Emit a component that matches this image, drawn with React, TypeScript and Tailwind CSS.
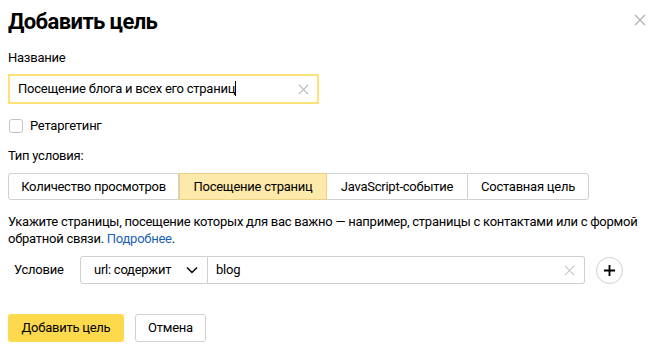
import React from "react";

export default function App() {
  return (
    <div className="relative w-[658px] h-[348px] bg-white text-[13px] text-[#000] overflow-hidden tracking-[-0.25px]" style={{ fontFamily: "Roboto, 'Noto Sans', sans-serif" }}>
      <button className="absolute left-[633px] top-[13px] w-[14px] h-[14px] text-[#b3b3b3]">
        <svg viewBox="0 0 14 14" width="14" height="14" fill="none" stroke="currentColor" strokeWidth="1.4">
          <path d="M2 2 L12 12 M12 2 L2 12" />
        </svg>
      </button>
      <div className="pl-[8px] pt-[8px] flex flex-col">
        <h1 className="text-[22px] font-bold leading-[28px] tracking-[-0.6px]">Добавить цель</h1>
        <div className="mt-[14px] leading-[16px]">Название</div>
        <div className="mt-[8px] w-[311px] h-[30px] border-2 border-[#fde27a] flex items-center pl-[8px] pr-[8px]">
          <span className="flex-1 leading-[16px]">Посещение блога и всех его страниц<span className="inline-block w-[1px] h-[15px] bg-black align-[-3px]" /></span>
          <svg viewBox="0 0 12 12" width="11" height="11" fill="none" stroke="#b3b3b3" strokeWidth="1.1">
            <path d="M1 1 L11 11 M11 1 L1 11" />
          </svg>
        </div>
        <div className="mt-[15px] flex items-center h-[14px]">
          <span className="w-[14px] h-[14px] ml-[1px] border border-[#c4c4c4] rounded-[3px]" />
          <span className="ml-[7px] leading-[16px]">Ретаргетинг</span>
        </div>
        <div className="mt-[15px] leading-[16px]">Тип условия:</div>
        <div className="mt-[9px] flex h-[27px]">
          <div className="w-[171px] border border-[#d0d0d0] rounded-l-[3px] flex items-center justify-center">Количество просмотров</div>
          <div className="w-[148px] bg-[#fde9a9] border border-[#ebd083] flex items-center justify-center">Посещение страниц</div>
          <div className="w-[140px] border-y border-[#d0d0d0] flex items-center justify-center">JavaScript-событие</div>
          <div className="w-[122px] border border-[#d0d0d0] rounded-r-[3px] flex items-center justify-center">Составная цель</div>
        </div>
        <p className="mt-[13px] leading-[17px] w-[648px]">
          Укажите страницы, посещение которых для вас важно — например, страницы с контактами или с формой обратной связи. <span className="text-[#1a5fb4]">Подробнее</span>.
        </p>
        <div className="mt-[9px] flex items-center h-[28px]">
          <span className="ml-[6px] w-[66px]">Условие</span>
          <div className="w-[128px] h-[28px] border border-[#d0d0d0] rounded-l-[3px] flex items-center pl-[13px] pr-[9px]">
            <span className="flex-1">url: содержит</span>
            <svg viewBox="0 0 12 8" width="12" height="8" fill="none" stroke="#000" strokeWidth="1.4">
              <path d="M1 1.5 L6 6.5 L11 1.5" />
            </svg>
          </div>
          <div className="w-[377px] h-[28px] border-y border-r border-[#d0d0d0] rounded-r-[3px] flex items-center pl-[8px] pr-[9px]">
            <span className="flex-1">blog</span>
            <svg viewBox="0 0 12 12" width="11" height="11" fill="none" stroke="#c4c4c4" strokeWidth="1.1">
              <path d="M1 1 L11 11 M11 1 L1 11" />
            </svg>
          </div>
          <div className="ml-[11px] w-[27px] h-[27px] rounded-full border border-[#d0d0d0] flex items-center justify-center">
            <svg viewBox="0 0 14 14" width="13" height="13" fill="none" stroke="#000" strokeWidth="2">
              <path d="M7 1 V13 M1 7 H13" />
            </svg>
          </div>
        </div>
        <div className="mt-[30px] flex gap-[11px]">
          <button className="w-[116px] h-[28px] rounded-[3px] bg-[#fdd94d] text-[13px]">Добавить цель</button>
          <button className="w-[71px] h-[28px] rounded-[3px] border border-[#d0d0d0] text-[13px]">Отмена</button>
        </div>
      </div>
    </div>
  );
}
